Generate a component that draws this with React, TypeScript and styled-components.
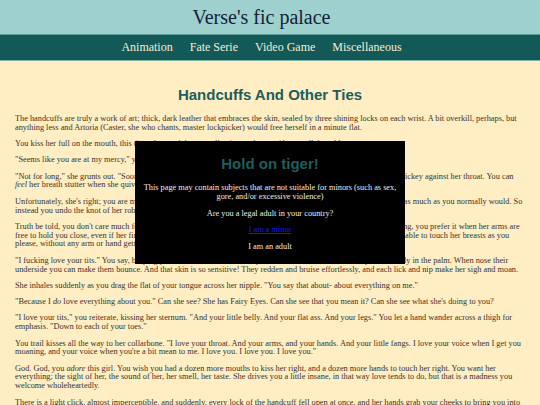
import styled, { createGlobalStyle } from "styled-components";

const GlobalStyle = createGlobalStyle`
  html, body {
    margin: 0;
    padding: 0;
    background-color: #ffedc4;
  }
  body {
    font-family: "Liberation Serif", "Times New Roman", serif;
    color: #3a3327;
  }
`;

const paragraphs: React.ReactNode[] = [
  "The handcuffs are truly a work of art; thick, dark leather that embraces the skin, sealed by three shining locks on each wrist. A bit overkill, perhaps, but anything less and Artoria (Caster, she who chants, master lockpicker) would free herself in a minute flat.",
  "You kiss her full on the mouth, this time slow and deep, swallowing each one of her small, breathless gasps.",
  '"Seems like you are at my mercy," you murmur against her lips.',
  <>
    "Not for long," she grunts out. "Soon as I get out of these, you're in for it." You laugh and lean down close to suck a hickey against her throat. You can{" "}
    <em>feel</em> her breath stutter when she quivers beneath you.
  </>,
  "Unfortunately, she's right; you are merely buying time, and you don't trust the cuffs (or yourself, seeing her like this) as much as you normally would. So instead you undo the knot of her robe and slowly push the red fabric aside, baring her to the air of the room.",
  "Truth be told, you don't care much for the handcuffs themselves, nor any other restraints, to be quite honest. If anything, you prefer it when her arms are free to hold you close, even if her fingers always like to wander where they shouldn't. But this way, you are perfectly able to touch her breasts as you please, without any arm or hand getting in the way.",
  '"I fucking love your tits." You say, burying your face between them. They\'re so soft and so warm, and they fit so nicely in the palm. When nose their underside you can make them bounce. And that skin is so sensitive! They redden and bruise effortlessly, and each lick and nip make her sigh and moan.',
  'She inhales suddenly as you drag the flat of your tongue across her nipple. "You say that about- about everything on me."',
  <>
    "Because I <em>do</em> love everything about you." Can she see? She has Fairy Eyes. Can she see that you mean it? Can she see what she's doing to you?
  </>,
  '"I love your tits," you reiterate, kissing her sternum. "And your little belly. And your flat ass. And your legs." You let a hand wander across a thigh for emphasis. "Down to each of your toes."',
  'You trail kisses all the way to her collarbone. "I love your throat. And your arms, and your hands. And your little fangs. I love your voice when I get you moaning, and your voice when you\'re a bit mean to me. I love you. I love you. I love you."',
  <>
    God. God, you <em>adore</em> this girl. You wish you had a dozen more mouths to kiss her right, and a dozen more hands to touch her right. You want her everything; the sight of her, the sound of her, her smell, her taste. She drives you a little insane, in that way love tends to do, but that is a madness you welcome wholeheartedly.
  </>,
  "There is a light click, almost imperceptible, and suddenly, every lock of the handcuff fell open at once, and her hands grab your cheeks to bring you into a kiss that steals the breath right out of your lungs.",
];

const navItems = ["Animation", "Fate Serie", "Video Game", "Miscellaneous"];

export default function App() {
  return (
    <>
      <GlobalStyle />
      <Banner>
        <SiteTitle>Verse's fic palace</SiteTitle>
      </Banner>
      <Nav>
        {navItems.map((item) => (
          <NavLink key={item} href="#">
            {item}
          </NavLink>
        ))}
      </Nav>
      <Story>
        <StoryTitle>Handcuffs And Other Ties</StoryTitle>
        {paragraphs.map((p, i) => (
          <Paragraph key={i}>{p}</Paragraph>
        ))}
      </Story>
      <Overlay>
        <WarningBox>
          <WarningTitle>Hold on tiger!</WarningTitle>
          <WarningText>
            This page may contain subjects that are not suitable for minors (such as sex, gore, and/or excessive violence)
          </WarningText>
          <WarningText>Are you a legal adult in your country?</WarningText>
          <WarningText>
            <MinorLink href="#">I am a minor</MinorLink>
          </WarningText>
          <WarningText>I am an adult</WarningText>
        </WarningBox>
      </Overlay>
    </>
  );
}

const Banner = styled.header`
  display: flex;
  align-items: center;
  justify-content: center;
  height: 35px;
  padding-right: 17px; // scrollbar gutter
  background-color: #9ed0ce;
  border-bottom: 1px solid #5e9a98;
  box-sizing: border-box;
`;

const SiteTitle = styled.h1`
  margin: 0;
  font-size: 20px;
  font-weight: normal;
  color: #142238;
`;

const Nav = styled.nav`
  display: flex;
  align-items: center;
  justify-content: center;
  gap: 17px;
  height: 26px;
  padding-right: 17px;
  background-color: #135957;
  border-bottom: 1px solid #7fb3a8;
  box-sizing: border-box;
`;

const NavLink = styled.a`
  font-size: 12px;
  color: #f3ecd8;
  text-decoration: none;
`;

const Story = styled.main`
  padding: 0 15px;
`;

const StoryTitle = styled.h2`
  margin: 0;
  padding: 25px 0 12px;
  text-align: center;
  font-family: "Liberation Sans", Arial, sans-serif;
  font-size: 15px;
  font-weight: bold;
  color: #1d5e5b;
`;

const Paragraph = styled.p`
  margin: 0 0 7.5px;
  font-size: 8.3px;
  line-height: 8.8px;
`;

// age gate, sits over the story
const Overlay = styled.div`
  position: fixed;
  inset: 0;
  display: flex;
  align-items: center;
  justify-content: center;
`;

const WarningBox = styled.div`
  width: 270px;
  height: 123px;
  padding: 6px 6px 0;
  box-sizing: border-box;
  background-color: #000;
  text-align: center;
`;

const WarningTitle = styled.h2`
  margin: 8px 0 12px;
  font-family: "Liberation Sans", Arial, sans-serif;
  font-size: 15px;
  font-weight: bold;
  color: #1f5c5a;
`;

const WarningText = styled.p`
  margin: 0 0 8px;
  font-size: 8.3px;
  line-height: 8.8px;
  color: #eeeeee;
`;

const MinorLink = styled.a`
  color: #1a1ae0;
  text-decoration: underline;
`;
